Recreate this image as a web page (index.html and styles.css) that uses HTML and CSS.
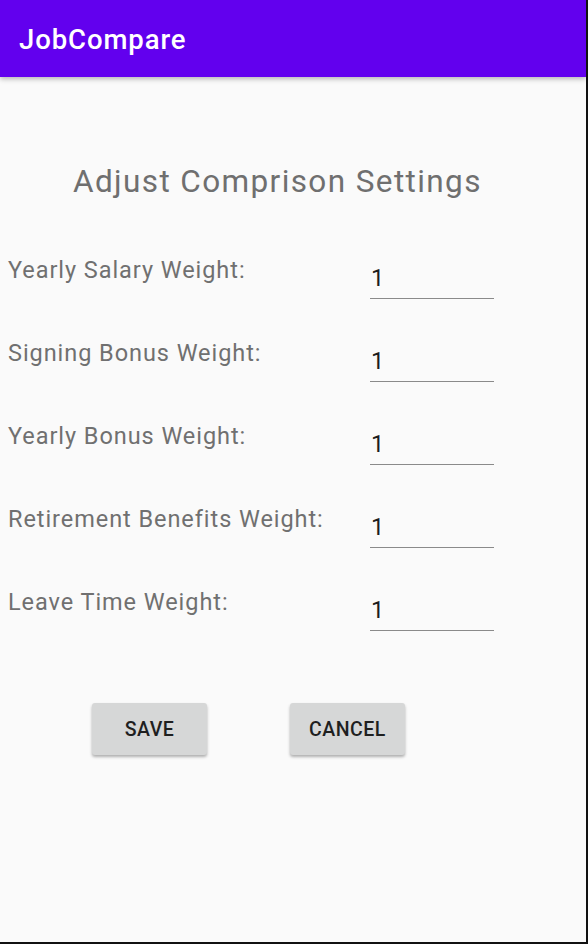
FILE: index.html
```html
<!DOCTYPE html>
<html>
<head>
<meta charset="utf-8">
<link rel="stylesheet" href="styles.css">
</head>
<body>
<div class="screen">
  <header class="appbar">
    <span class="appbar-title">JobCompare</span>
  </header>
  <main class="content">
    <h1 class="title">Adjust Comprison Settings</h1>
    <div class="form">
      <div class="row">
        <label class="label">Yearly Salary Weight:</label>
        <div class="field">1</div>
      </div>
      <div class="row">
        <label class="label">Signing Bonus Weight:</label>
        <div class="field">1</div>
      </div>
      <div class="row">
        <label class="label">Yearly Bonus Weight:</label>
        <div class="field">1</div>
      </div>
      <div class="row">
        <label class="label">Retirement Benefits Weight:</label>
        <div class="field">1</div>
      </div>
      <div class="row">
        <label class="label">Leave Time Weight:</label>
        <div class="field">1</div>
      </div>
    </div>
    <div class="actions">
      <button class="btn btn-save">SAVE</button>
      <button class="btn btn-cancel">CANCEL</button>
    </div>
  </main>
</div>
</body>
</html>
```
FILE: styles.css
```css
html, body {
  margin: 0;
  padding: 0;
}
body {
  background: #fafafa;
  font-family: Roboto, "Noto Sans", sans-serif;
}
.screen {
  box-sizing: border-box;
  width: 588px;
  height: 944px;
  border-right: 2px solid #111;
  border-bottom: 2px solid #111;
  background: #fafafa;
  overflow: hidden;
}
.appbar {
  height: 77px;
  background: #6200ee;
  display: flex;
  align-items: center;
  padding-left: 19px;
  box-shadow: 0 2px 5px rgba(0,0,0,0.28);
  position: relative;
}
.appbar-title {
  color: #ffffff;
  font-size: 27.5px;
  font-weight: 500;
  letter-spacing: 0.033em;
  margin-top: 1px;
}
.content {
  padding-top: 86px;
}
.title {
  margin: 0 0 0 73px;
  font-size: 31.5px;
  font-weight: 400;
  color: #6f6f6f;
  line-height: 38px;
  letter-spacing: 0.044em;
}
.form {
  display: flex;
  flex-direction: column;
  margin-top: 54px;
}
.row {
  display: grid;
  grid-template-columns: 370px 124px;
  height: 83px;
}
.label {
  padding-left: 8px;
  font-size: 23.5px;
  color: #707070;
  line-height: 30px;
  letter-spacing: 0.04em;
  white-space: nowrap;
}
.field {
  box-sizing: border-box;
  height: 44px;
  padding-left: 1px;
  padding-top: 8px;
  font-size: 23.5px;
  line-height: 30px;
  color: #1c1c1c;
  border-bottom: 1.5px solid #8a8a8a;
}
.actions {
  display: flex;
  gap: 83px;
  padding-left: 92px;
  margin-top: 33px;
}
.btn {
  height: 52px;
  border: none;
  border-radius: 3px;
  background: #d6d7d7;
  box-shadow: 0 2px 3px rgba(0,0,0,0.3);
  font-family: Roboto, "Noto Sans", sans-serif;
  font-weight: 500;
  font-size: 19.5px;
  color: #1f1f1f;
  letter-spacing: 0.5px;
  padding: 0;
}
.btn-save { width: 115px; }
.btn-cancel { width: 115px; }
```
